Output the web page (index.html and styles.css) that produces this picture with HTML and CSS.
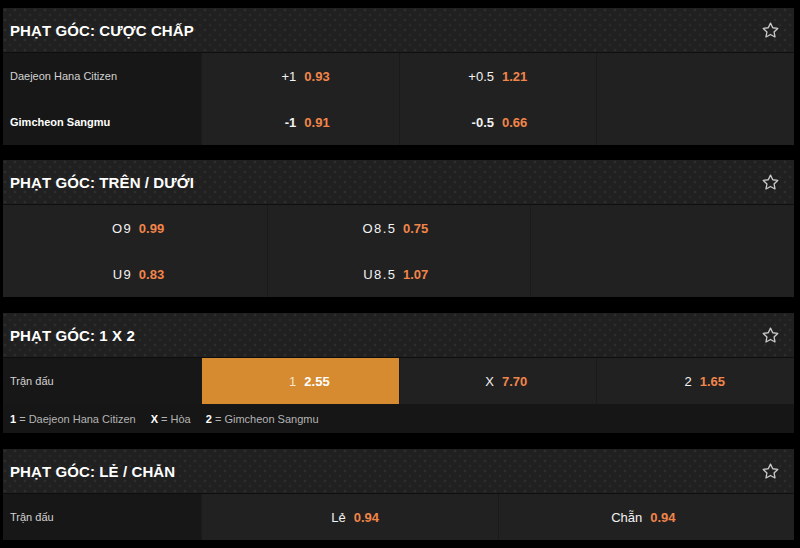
FILE: index.html
```html
<!DOCTYPE html>
<html lang="vi">
<head>
<meta charset="utf-8">
<link rel="stylesheet" href="styles.css">
</head>
<body>
<div class="page">

  <section class="market first">
    <header class="mk-head">
      <h2 class="mk-title">PHẠT GÓC: CƯỢC CHẤP</h2>
      <svg class="star" viewBox="0 0 20 20"><path d="M10 2.2l2.35 4.9 5.3.7-3.9 3.7 1 5.3L10 14.2l-4.75 2.6 1-5.3-3.9-3.7 5.3-.7z" fill="none" stroke="#c8c8c8" stroke-width="1.4" stroke-linejoin="round"/></svg>
    </header>
    <div class="grid g-lab3">
      <div class="lab">Daejeon Hana Citizen</div>
      <div class="cell"><span class="ln">+1</span><span class="od">0.93</span></div>
      <div class="cell"><span class="ln">+0.5</span><span class="od">1.21</span></div>
      <div class="cell"></div>
      <div class="lab strong">Gimcheon Sangmu</div>
      <div class="cell"><span class="ln b">-1</span><span class="od">0.91</span></div>
      <div class="cell"><span class="ln b">-0.5</span><span class="od">0.66</span></div>
      <div class="cell"></div>
    </div>
  </section>

  <section class="market">
    <header class="mk-head">
      <h2 class="mk-title">PHẠT GÓC: TRÊN / DƯỚI</h2>
      <svg class="star" viewBox="0 0 20 20"><path d="M10 2.2l2.35 4.9 5.3.7-3.9 3.7 1 5.3L10 14.2l-4.75 2.6 1-5.3-3.9-3.7 5.3-.7z" fill="none" stroke="#c8c8c8" stroke-width="1.4" stroke-linejoin="round"/></svg>
    </header>
    <div class="grid g-3">
      <div class="cell"><span class="ln sp">O9</span><span class="od">0.99</span></div>
      <div class="cell"><span class="ln sp">O8.5</span><span class="od">0.75</span></div>
      <div class="cell"></div>
      <div class="cell"><span class="ln sp">U9</span><span class="od">0.83</span></div>
      <div class="cell"><span class="ln sp">U8.5</span><span class="od">1.07</span></div>
      <div class="cell"></div>
    </div>
  </section>

  <section class="market">
    <header class="mk-head">
      <h2 class="mk-title">PHẠT GÓC: 1 X 2</h2>
      <svg class="star" viewBox="0 0 20 20"><path d="M10 2.2l2.35 4.9 5.3.7-3.9 3.7 1 5.3L10 14.2l-4.75 2.6 1-5.3-3.9-3.7 5.3-.7z" fill="none" stroke="#c8c8c8" stroke-width="1.4" stroke-linejoin="round"/></svg>
    </header>
    <div class="grid g-lab3">
      <div class="lab">Trận đấu</div>
      <div class="cell sel"><span class="ln">1</span><span class="od">2.55</span></div>
      <div class="cell"><span class="ln">X</span><span class="od">7.70</span></div>
      <div class="cell"><span class="ln">2</span><span class="od">1.65</span></div>
    </div>
    <div class="legend">
      <span class="lg"><b>1</b> = Daejeon Hana Citizen</span>
      <span class="lg"><b>X</b> = Hòa</span>
      <span class="lg"><b>2</b> = Gimcheon Sangmu</span>
    </div>
  </section>

  <section class="market">
    <header class="mk-head">
      <h2 class="mk-title">PHẠT GÓC: LẺ / CHẴN</h2>
      <svg class="star" viewBox="0 0 20 20"><path d="M10 2.2l2.35 4.9 5.3.7-3.9 3.7 1 5.3L10 14.2l-4.75 2.6 1-5.3-3.9-3.7 5.3-.7z" fill="none" stroke="#c8c8c8" stroke-width="1.4" stroke-linejoin="round"/></svg>
    </header>
    <div class="grid g-lab2">
      <div class="lab">Trận đấu</div>
      <div class="cell"><span class="ln">Lẻ</span><span class="od">0.94</span></div>
      <div class="cell"><span class="ln">Chẵn</span><span class="od">0.94</span></div>
    </div>
  </section>

</div>
</body>
</html>
```

FILE: styles.css
```css
html, body {
  margin: 0;
  padding: 0;
  background: #000;
}

body {
  font-family: "Liberation Sans", Arial, sans-serif;
  color: #fff;
}

.page {
  padding: 8px 6px 8px 3px;
  display: flex;
  flex-direction: column;
  gap: 16px;
}

.market {
  background: #1d1d1d;
}

.market.first {
  margin-bottom: -1px;
}

.mk-head {
  height: 44px;
  border-bottom: 1px solid #0e0e0e;
  display: flex;
  align-items: center;
  justify-content: space-between;
  padding: 0 14px 0 7px;
  background-color: #202020;
  background-image:
    radial-gradient(circle at 2px 2px, #2d2d2d 1.2px, transparent 1.7px),
    radial-gradient(circle at 2px 2px, #292929 1.2px, transparent 1.7px);
  background-size: 10px 10px, 10px 10px;
  background-position: 0 0, 5px 5px;
}

.mk-title {
  margin: 0;
  font-size: 15px;
  font-weight: 700;
  letter-spacing: 0.1px;
  color: #fff;
}

.star {
  width: 19px;
  height: 19px;
  display: block;
}

.grid {
  display: grid;
  grid-auto-rows: 46px;
}

.g-lab3 { grid-template-columns: 198px 1fr 1fr 1fr; }
.g-lab2 { grid-template-columns: 198px 1fr 1fr; }
.g-3 { grid-template-columns: 1fr 1fr 1fr; }

.lab {
  background: #171717;
  display: flex;
  align-items: center;
  padding-left: 7px;
  font-size: 11px;
  color: #d2d2d2;
}

.lab.strong {
  font-weight: 700;
  color: #fff;
}

.cell {
  background: #212121;
  border-left: 1px solid #1a1a1a;
  display: grid;
  grid-template-columns: 1fr 1fr;
  column-gap: 8px;
  align-items: center;
  font-size: 13px;
}

.g-3 .cell:nth-child(3n+1) { border-left: 0; }

.ln {
  color: #f2f2f2;
  text-align: right;
}

.ln.b { font-weight: 700; }

.ln.sp { letter-spacing: 1.4px; margin-right: -1.4px; }

.od {
  color: #f2854a;
  font-weight: 700;
  text-align: left;
}

.cell.sel {
  background: #d68b30;
}

.cell.sel .ln { color: #f4e3cc; }
.cell.sel .od { color: #fff; }

.legend {
  height: 29px;
  background: #161616;
  display: flex;
  align-items: center;
  gap: 15px;
  padding-left: 7px;
  font-size: 11px;
  color: #b4b4b4;
}

.legend b {
  color: #fff;
  font-weight: 700;
}
```
